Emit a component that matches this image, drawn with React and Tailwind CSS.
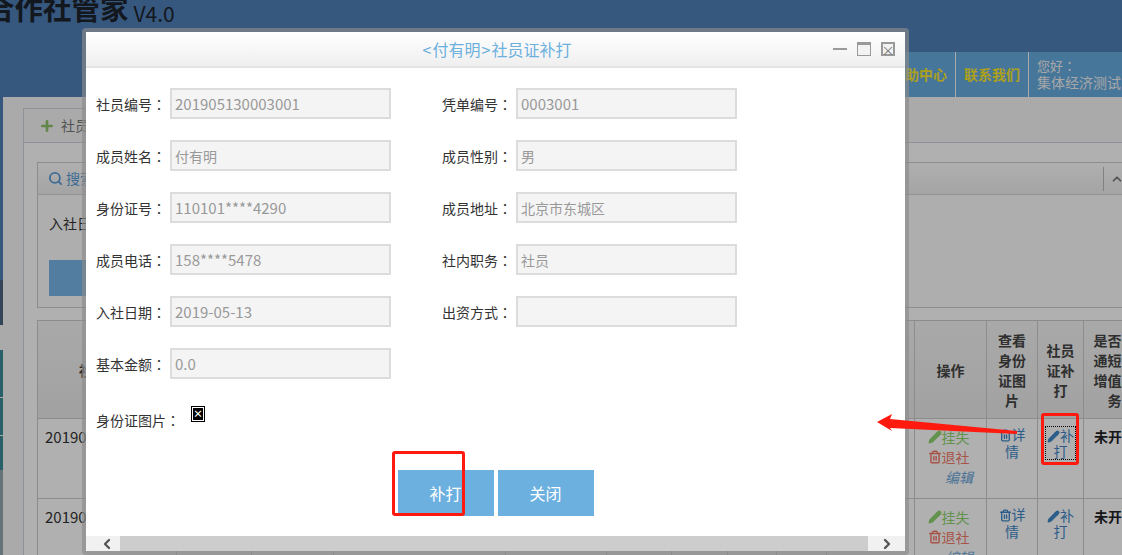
import React from 'react';
import { Plus, Search, Pencil, Trash2, ChevronLeft, ChevronRight, ChevronUp } from 'lucide-react';

const FONT = '"Noto Sans CJK SC", "Liberation Sans", sans-serif';

const FIELDS = [
    [['社员编号', '201905130003001'], ['凭单编号', '0003001']],
    [['成员姓名', '付有明'], ['成员性别', '男']],
    [['身份证号', '110101****4290'], ['成员地址', '北京市东城区']],
    [['成员电话', '158****5478'], ['社内职务', '社员']],
    [['入社日期', '2019-05-13'], ['出资方式', '']],
    [['基本金额', '0.0']],
];

// hidden columns under the dialog, only their grid lines show at the bottom edge
const HIDDEN_COLS = ['w-[75px]', 'w-[82px]', 'w-[172px]', 'w-[101px]', 'w-[65px]', 'w-[56px]', 'w-[49px]', 'w-[50px]', 'w-[88px]'];

const SIDE_STRIP = [
    'h-[183px] bg-[#4f7eb5]',
    'h-[45px] bg-[#49607f]',
    'h-[25px] bg-[#f4f4f4]',
    'h-[48px] bg-[#3c8995] border-b border-[#f4f4f4]',
    'h-[38px] bg-[#3c8995] border-b border-[#f4f4f4]',
    'h-[34px] bg-[#3c8995]',
    'h-[85px] bg-[#92a7ae]',
];

const Colon = () => <span className="font-['Noto_Sans_CJK_TC']">：</span>;

const Field = ({ label, value }) => (
    <div className="flex items-center w-[346px]">
        <span className="w-[74px] pt-[1px] text-[14px] text-[#333] whitespace-nowrap">{label}<Colon /></span>
        <div className={`w-[221px] h-[31px] border-2 border-[#dcdcdc] bg-[#f4f4f4] pl-[3px] pt-[1px] flex items-center text-[#999] ${/^[\x00-\x7f]*$/.test(value) ? 'text-[15px]' : 'text-[14px]'}`}>
            {value}
        </div>
    </div>
);

const ActionCells = ({ focus }) => (
    <>
        <td className="border border-[#c9c9c9] align-top pt-[8px] pr-[4px] text-[14px] leading-[20px]">
            <div className="flex items-center justify-center text-[#8fd16f]"><Pencil size={14} fill="#8fd16f" />挂失</div>
            <div className="flex items-center justify-center text-[#f07a6a]"><Trash2 size={14} strokeWidth={2.5} />退社</div>
            <div className="pl-[30px] italic text-[#6ea6d8]">编辑</div>
        </td>
        <td className="border border-[#c9c9c9] align-top pt-[7px] px-[11px] text-[14px] leading-[17px] text-center text-[#3f86c6]">
            <Trash2 size={13} strokeWidth={2.5} className="inline align-[-2px]" />详情
        </td>
        <td className="border border-[#c9c9c9] align-top pt-[7px] text-center text-[14px] leading-[16px] text-[#3f86c6]">
            <div className={focus ? 'mx-[7px] border border-dotted border-black' : 'mx-[7px] border border-transparent'}>
                <Pencil size={13} fill="#3f86c6" className="inline align-[-2px]" />补打
            </div>
        </td>
        <td className="border border-[#c9c9c9] align-top pt-[7px] pl-[10px] text-[14px] font-bold text-[#222] whitespace-nowrap overflow-hidden">未开通</td>
    </>
);

const TableRow = ({ code, focus }) => (
    <tr className="h-[80px]">
        <td className="border border-[#c9c9c9] align-top pl-[7px] pt-[7px] text-[15px] text-[#333] whitespace-nowrap overflow-hidden">{code}</td>
        {HIDDEN_COLS.map(c => <td key={c} className="border border-[#c9c9c9]" />)}
        <ActionCells focus={focus} />
    </tr>
);

const BackgroundTable = () => (
    <table className="table-fixed border-collapse w-[1108px] bg-[#fdfdfd]">
        <colgroup>
            <col className="w-[139px]" />
            {HIDDEN_COLS.map(c => <col key={c} className={c} />)}
            <col className="w-[72px]" />
            <col className="w-[51px]" />
            <col className="w-[46px]" />
            <col className="w-[62px]" />
        </colgroup>
        <thead>
            <tr className="h-[98px] bg-gradient-to-b from-[#f2f2f2] to-[#e8e8e8] text-[14px] leading-[20px] font-bold text-[#444]">
                <th className="border border-[#c9c9c9]">社员编号</th>
                {HIDDEN_COLS.map(c => <th key={c} className="border border-[#c9c9c9]" />)}
                <th className="border border-[#c9c9c9]">操作</th>
                <th className="border border-[#c9c9c9] px-[8px]">查看身份证图片</th>
                <th className="border border-[#c9c9c9] px-[7px]">社员证补打</th>
                <th className="border border-[#c9c9c9] px-[9px]">是否开通短信增值服务</th>
            </tr>
        </thead>
        <tbody>
            <TableRow code="201905130003001" focus />
            <TableRow code="201905130003002" />
        </tbody>
    </table>
);

const BackgroundPage = () => (
    <div className="w-[1122px] h-[555px] bg-[#4f7eb5] overflow-hidden flex flex-col">
        <div className="h-[52px] flex items-start -ml-[14px] -mt-[4px] text-[#1c222c]">
            <span className="text-[28.5px] leading-[24px] font-bold whitespace-nowrap">合作社管家</span>
            <span className="ml-[5px] text-[21px] leading-[24px] mt-[5px]">V4.0</span>
        </div>
        <div className="h-[45px] mt-[4px] flex justify-end">
            <div className="w-[60px] bg-[#65a9dc] border-r border-[#f4f4f4] flex items-center justify-end pr-[8px] text-[14px] font-bold text-[#f7e52b] whitespace-nowrap">帮助中心</div>
            <div className="w-[73px] bg-[#65a9dc] border-r border-[#f4f4f4] flex items-center justify-center text-[14px] font-bold text-[#f7e52b] whitespace-nowrap">联系我们</div>
            <div className="w-[93px] bg-[#65a9dc] pl-[8px] pt-[5px] text-[14px] leading-[16px] text-[#f0f0f0] whitespace-nowrap overflow-hidden">
                <span className="text-[13px]">您好<Colon /></span><br />集体经济测试
            </div>
        </div>
        <div className="flex-1 flex min-h-0">
            <div className="w-[3px] shrink-0 flex flex-col">
                {SIDE_STRIP.map(c => <div key={c} className={c} />)}
            </div>
            <div className="flex-1 bg-[#f4f4f4] pt-[11px] pl-[20px] min-w-0">
                <div className="w-[1150px] border-l border-[#c9d2d9]">
                    <div className="h-[34px] flex">
                        <div className="w-[120px] border-t border-r border-[#c9d2d9] flex items-center pl-[15px] text-[14px] text-[#777]">
                            <Plus size={16} strokeWidth={4} className="text-[#8fc26a] mr-[6px]" />社员管理
                        </div>
                    </div>
                    <div className="h-[500px] bg-[#fdfdfd] border-t border-[#c9d2d9] pt-[19px] pl-[13px]">
                        <div className="w-[1130px] h-[146px] border border-[#c9c9c9] bg-[#f9f9f9]">
                            <div className="h-[32px] bg-gradient-to-b from-[#fbfbfb] to-[#ececec] border-b border-[#d5d5d5] flex items-center justify-between pl-[10px] pr-[42px] text-[14px] text-[#5b9bd5]">
                                <span className="flex items-center"><Search size={15} strokeWidth={3} className="mr-[3px]" />搜索</span>
                                <span className="flex items-center h-[24px] border-l border-[#bbb] pl-[6px] text-[#777]"><ChevronUp size={14} strokeWidth={3} /></span>
                            </div>
                            <div className="pl-[11px] pt-[18px] text-[14px] text-[#333]">入社日期</div>
                            <div className="ml-[11px] mt-[26px] w-[120px] h-[36px] bg-[#76b4e6] flex items-center justify-center text-[14px] text-white">查询</div>
                        </div>
                        <div className="mt-[12px]">
                            <BackgroundTable />
                        </div>
                    </div>
                </div>
            </div>
        </div>
    </div>
);

const Dialog = () => (
    <div className="absolute left-[82px] top-[28px] w-[827px] h-[527px] border-4 border-[rgba(140,140,140,0.65)] rounded-[4px] bg-white bg-clip-padding flex flex-col">
        <div className="relative h-[36px] shrink-0 pl-[3px] border-b-2 border-[#e4e4e4] bg-gradient-to-b from-white to-[#efefef] flex items-center justify-center text-[16px] text-[#6cb0dd]">
            <span className="pr-[1px]">&lt;</span>付有明<span className="px-[1px]">&gt;</span>社员证补打
            <div className="absolute right-[10px] top-[10px] flex items-center gap-[10px]">
                <span className="w-[14px] h-[2px] bg-[#999]" />
                <span className="w-[14px] h-[14px] border border-[#999] border-t-[3px] bg-[#f2f2f2]" />
                <span className="w-[14px] h-[14px] border-2 border-[#999] bg-[#f2f2f2] flex items-center justify-center text-[13px] leading-none text-[#777]">×</span>
            </div>
        </div>
        <div className="flex-1 pl-[10px] pt-[20px]">
            <div className="flex flex-col gap-[21px]">
                {FIELDS.map((row, i) => (
                    <div key={i} className="flex">
                        {row.map(([label, value]) => <Field key={label} label={label} value={value} />)}
                    </div>
                ))}
            </div>
            <div className="flex mt-[28px] h-[30px]">
                <span className="text-[14px] text-[#333] w-[95px] pt-[3px]">身份证图片<Colon /></span>
                <span className="w-[14px] h-[16px] border border-black p-[1px] -mt-[1px]">
                    <span className="w-full h-full bg-black text-white text-[10px] leading-[12px] font-bold flex items-center justify-center">×</span>
                </span>
            </div>
            <div className="flex justify-center gap-[4px] mt-[33px] pr-[10px]">
                <button className="w-[96px] h-[46px] bg-[#6cb0df] text-white text-[16px]">补打</button>
                <button className="w-[96px] h-[46px] bg-[#6cb0df] text-white text-[16px]">关闭</button>
            </div>
        </div>
        <div className="h-[15px] shrink-0 bg-[#f1f1f1] flex items-center">
            <div className="w-[34px] flex justify-end pr-[5px]"><ChevronLeft size={16} strokeWidth={3.5} className="text-[#555]" /></div>
            <div className="flex-1 h-full bg-[#cdcdcd]" />
            <div className="w-[37px] flex justify-center"><ChevronRight size={16} strokeWidth={3.5} className="text-[#555]" /></div>
        </div>
    </div>
);

export default function App() {
    return (
        <div className="relative w-[1122px] h-[555px] overflow-hidden" style={{ fontFamily: FONT }}>
            <BackgroundPage />
            <div className="absolute inset-0 bg-black/30" />
            <Dialog />
            {/* red annotations drawn on the screenshot */}
            <div className="absolute left-[392px] top-[451px] w-[73px] h-[65px] border-[3px] border-[#ff1a10] rounded-[3px]" />
            <div className="absolute left-[1041px] top-[413px] w-[38px] h-[52px] border-[3px] border-[#ff1a10] rounded-[3px]" />
            <svg className="absolute left-[870px] top-[405px]" width="160" height="40" viewBox="0 0 160 40">
                <path d="M7 17 L22 9 L20 14 L147 26 L147 29 L20 23 L22 26 Z" fill="#ff1a10" />
            </svg>
        </div>
    );
}
